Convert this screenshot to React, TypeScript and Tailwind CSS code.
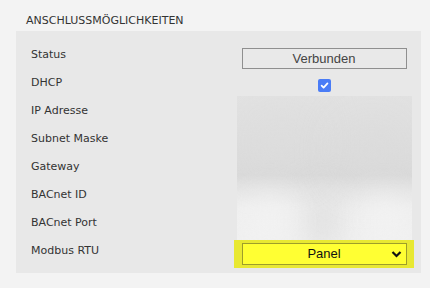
import React from "react";

const labels = [
  "Status",
  "DHCP",
  "IP Adresse",
  "Subnet Maske",
  "Gateway",
  "BACnet ID",
  "BACnet Port",
  "Modbus RTU",
];

export default function App() {
  return (
    <div className="h-[288px] w-[430px] overflow-hidden bg-[#f3f3f3] [font-family:'DejaVu_Sans',Verdana,sans-serif]">
      <div className="pl-[26px] pt-[14px] text-[11px] leading-[13px] text-[#333]">
        ANSCHLUSSMÖGLICHKEITEN
      </div>
      <div className="ml-[16px] mt-[4px] flex h-[242px] w-[405px] bg-[#e8e8e8]">
        <div className="flex w-[218px] flex-col pl-[15px] pt-[10px]">
          {labels.map((l) => (
            <div key={l} className="flex h-[28px] items-center text-[11px] text-[#333]">
              {l}
            </div>
          ))}
        </div>
        <div className="flex w-[180px] flex-col items-center pt-[17px]">
          <div className="flex h-[21px] w-[165px] items-center justify-center border border-[#8f8f8f] bg-[#e9e9e9] text-[13px] text-[#444] [font-family:'Liberation_Sans',Arial,sans-serif]">
            Verbunden
          </div>
          <div className="flex h-[27px] w-full justify-center pt-[10px]">
            <div className="flex h-[13px] w-[13px] items-center justify-center rounded-[2px] bg-[#4a7cf6]">
              <svg width="9" height="9" viewBox="0 0 10 10">
                <path d="M1.8 5.2 L4 7.4 L8.3 2.6" fill="none" stroke="#fff" strokeWidth="1.9" strokeLinecap="round" strokeLinejoin="round" />
              </svg>
            </div>
          </div>
          <div className="relative h-[144px] w-[175px] overflow-hidden bg-[linear-gradient(180deg,#e2e2e2_0%,#dedede_30%,#dadada_55%,#e6e6e6_66%,#efefef_78%,#f0f0f0_100%)]">
            <div className="absolute left-[72px] top-[95px] h-[60px] w-[26px] rounded-full bg-[#dcdcdc] blur-lg" />
            <div className="absolute left-[20px] top-[20px] h-[50px] w-[50px] rounded-full bg-[#dcdcdc] blur-xl" />
            <div className="absolute left-[110px] top-[30px] h-[50px] w-[50px] rounded-full bg-[#dadada] blur-xl" />
            <div className="absolute left-[125px] top-[100px] h-[50px] w-[45px] rounded-full bg-[#f2f2f2] blur-lg" />
            <div className="absolute left-[10px] top-[100px] h-[50px] w-[45px] rounded-full bg-[#f2f2f2] blur-lg" />
          </div>
          <div className="flex h-[28px] w-[180px] items-center justify-center bg-[#e8e832]">
            <div className="relative flex h-[22px] w-[165px] items-center justify-center border border-[#9d9d2a] bg-[#ffff33] text-[13px] text-[#111] [font-family:'Liberation_Sans',Arial,sans-serif]">
              Panel
              <svg className="absolute right-[4px] top-[6px]" width="11" height="8" viewBox="0 0 11 8">
                <path d="M1.5 2 L5.5 6 L9.5 2" fill="none" stroke="#111" strokeWidth="2.2" />
              </svg>
            </div>
          </div>
        </div>
      </div>
    </div>
  );
}
